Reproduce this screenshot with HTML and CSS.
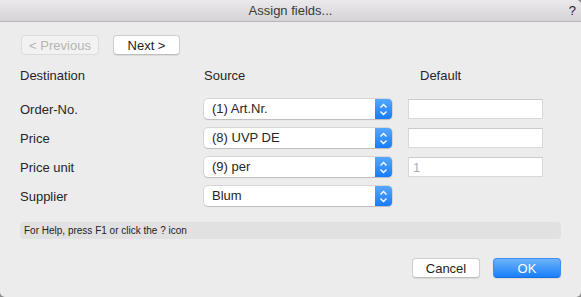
FILE: index.html
```html
<!DOCTYPE html>
<html lang="en">
<head>
  <meta charset="UTF-8">
  <title>Assign fields...</title>
  <link rel="stylesheet" href="styles.css">
</head>
<body>
  <div class="dialog">
    <div class="titleBar">
      <span></span>
      <span class="title">Assign fields...</span>
      <span class="helpMark">?</span>
    </div>

    <div class="content">
      <div class="navRow">
        <button class="btn disabled">&lt; Previous</button>
        <button class="btn">Next &gt;</button>
      </div>

      <div class="fieldGrid">
        <div class="head">Destination</div>
        <div class="head">Source</div>
        <div class="head headDefault">Default</div>

        <div class="label">Order-No.</div>
        <div class="select"><span class="value">(1) Art.Nr.</span><span class="stepper"></span></div>
        <input class="field" type="text">

        <div class="label">Price</div>
        <div class="select"><span class="value">(8) UVP DE</span><span class="stepper"></span></div>
        <input class="field" type="text">

        <div class="label">Price unit</div>
        <div class="select"><span class="value">(9) per</span><span class="stepper"></span></div>
        <input class="field" type="text" placeholder="1">

        <div class="label">Supplier</div>
        <div class="select"><span class="value">Blum</span><span class="stepper"></span></div>
        <div></div>
      </div>

      <div class="helpBar">For Help, press F1 or click the ? icon</div>

      <div class="footer">
        <button class="btn wide">Cancel</button>
        <button class="btn wide primary">OK</button>
      </div>
    </div>
  </div>

  <script>
    // stepper arrows, same for every popup
    const arrows = '<svg width="9" height="13" viewBox="0 0 9 13">' +
      '<path d="M1.5 4.5 L4.5 1.5 L7.5 4.5" fill="none" stroke="#fff" stroke-width="1.4"/>' +
      '<path d="M1.5 8.5 L4.5 11.5 L7.5 8.5" fill="none" stroke="#fff" stroke-width="1.4"/></svg>';
    document.querySelectorAll(".stepper").forEach((s) => {
      s.innerHTML = arrows;
    });
  </script>
</body>
</html>
```

FILE: styles.css
```css
body {
  margin: 0;
  background: #8a8a8a;
  font-family: "Liberation Sans", Arial, sans-serif;
  color: #262626;
}

.dialog {
  width: 581px;
  height: 297px;
  background: #ececec;
  border-radius: 0 5px 5px 5px;
  overflow: hidden;
}

.titleBar {
  height: 21px;
  display: grid;
  grid-template-columns: 1fr auto 1fr;
  align-items: center;
  background: linear-gradient(#ebe9eb, #d5d3d5);
  border-bottom: 1px solid #b8b6b8;
  font-size: 13px;
  color: #3a3a3a;
}

.helpMark {
  justify-self: end;
  padding-right: 5px;
  font-size: 13px;
  color: #222;
}

.content {
  padding: 0 20px 0 20px;
}

.navRow {
  display: flex;
  gap: 14px;
  margin-top: 13px;
  padding-left: 1px;
}

.btn {
  height: 20px;
  padding: 0;
  width: 67px;
  font-family: inherit;
  font-size: 13px;
  color: #1e1e1e;
  background: #fff;
  border: 1px solid #cfcfcf;
  border-bottom-color: #bdbdbd;
  border-radius: 4px;
  box-shadow: 0 0.5px 1px rgba(0, 0, 0, 0.08);
}

.btn.disabled {
  width: 78px;
  color: #b4b4b4;
  background: #f2f2f2;
  border-color: #dcdcdc;
  box-shadow: none;
}

.fieldGrid {
  display: grid;
  grid-template-columns: 168px 188px 135px;
  column-gap: 16px;
  row-gap: 9px;
  margin-top: 13px;
  align-items: center;
}

.head {
  font-size: 13px;
  line-height: 16px;
  margin-bottom: 6px;
}

.headDefault {
  padding-left: 12px;
}

.label {
  font-size: 13px;
}

.select {
  height: 20px;
  display: flex;
  background: #fff;
  border-radius: 4px;
  box-shadow: 0 0 0 0.5px rgba(0, 0, 0, 0.18), 0 1px 1px rgba(0, 0, 0, 0.12);
  overflow: hidden;
  font-size: 13px;
}

.select .value {
  flex: 1;
  padding-left: 8px;
  line-height: 20px;
}

.stepper {
  width: 17px;
  display: flex;
  align-items: center;
  justify-content: center;
  background: linear-gradient(#56a8ff, #177cfd);
}

.field {
  box-sizing: border-box;
  height: 20px;
  margin: 0;
  padding: 0 4px;
  border: 1px solid #d8d8d8;
  border-top-color: #cbcbcb;
  background: #fff;
  font-family: inherit;
  font-size: 13px;
}

.field::placeholder {
  color: #b0b0b0;
}

.helpBar {
  margin-top: 16px;
  height: 17px;
  line-height: 17px;
  padding-left: 4px;
  background: #e1e1e1;
  border-radius: 4px;
  font-size: 10px;
  color: #222;
}

.footer {
  display: flex;
  justify-content: flex-end;
  gap: 13px;
  margin-top: 19px;
}

.btn.wide {
  width: 68px;
}

.btn.primary {
  color: #fff;
  background: linear-gradient(#6cb3fa, #1a7ffb);
  border-color: #3d8ff5;
  border-bottom-color: #1a6fe0;
}
```
